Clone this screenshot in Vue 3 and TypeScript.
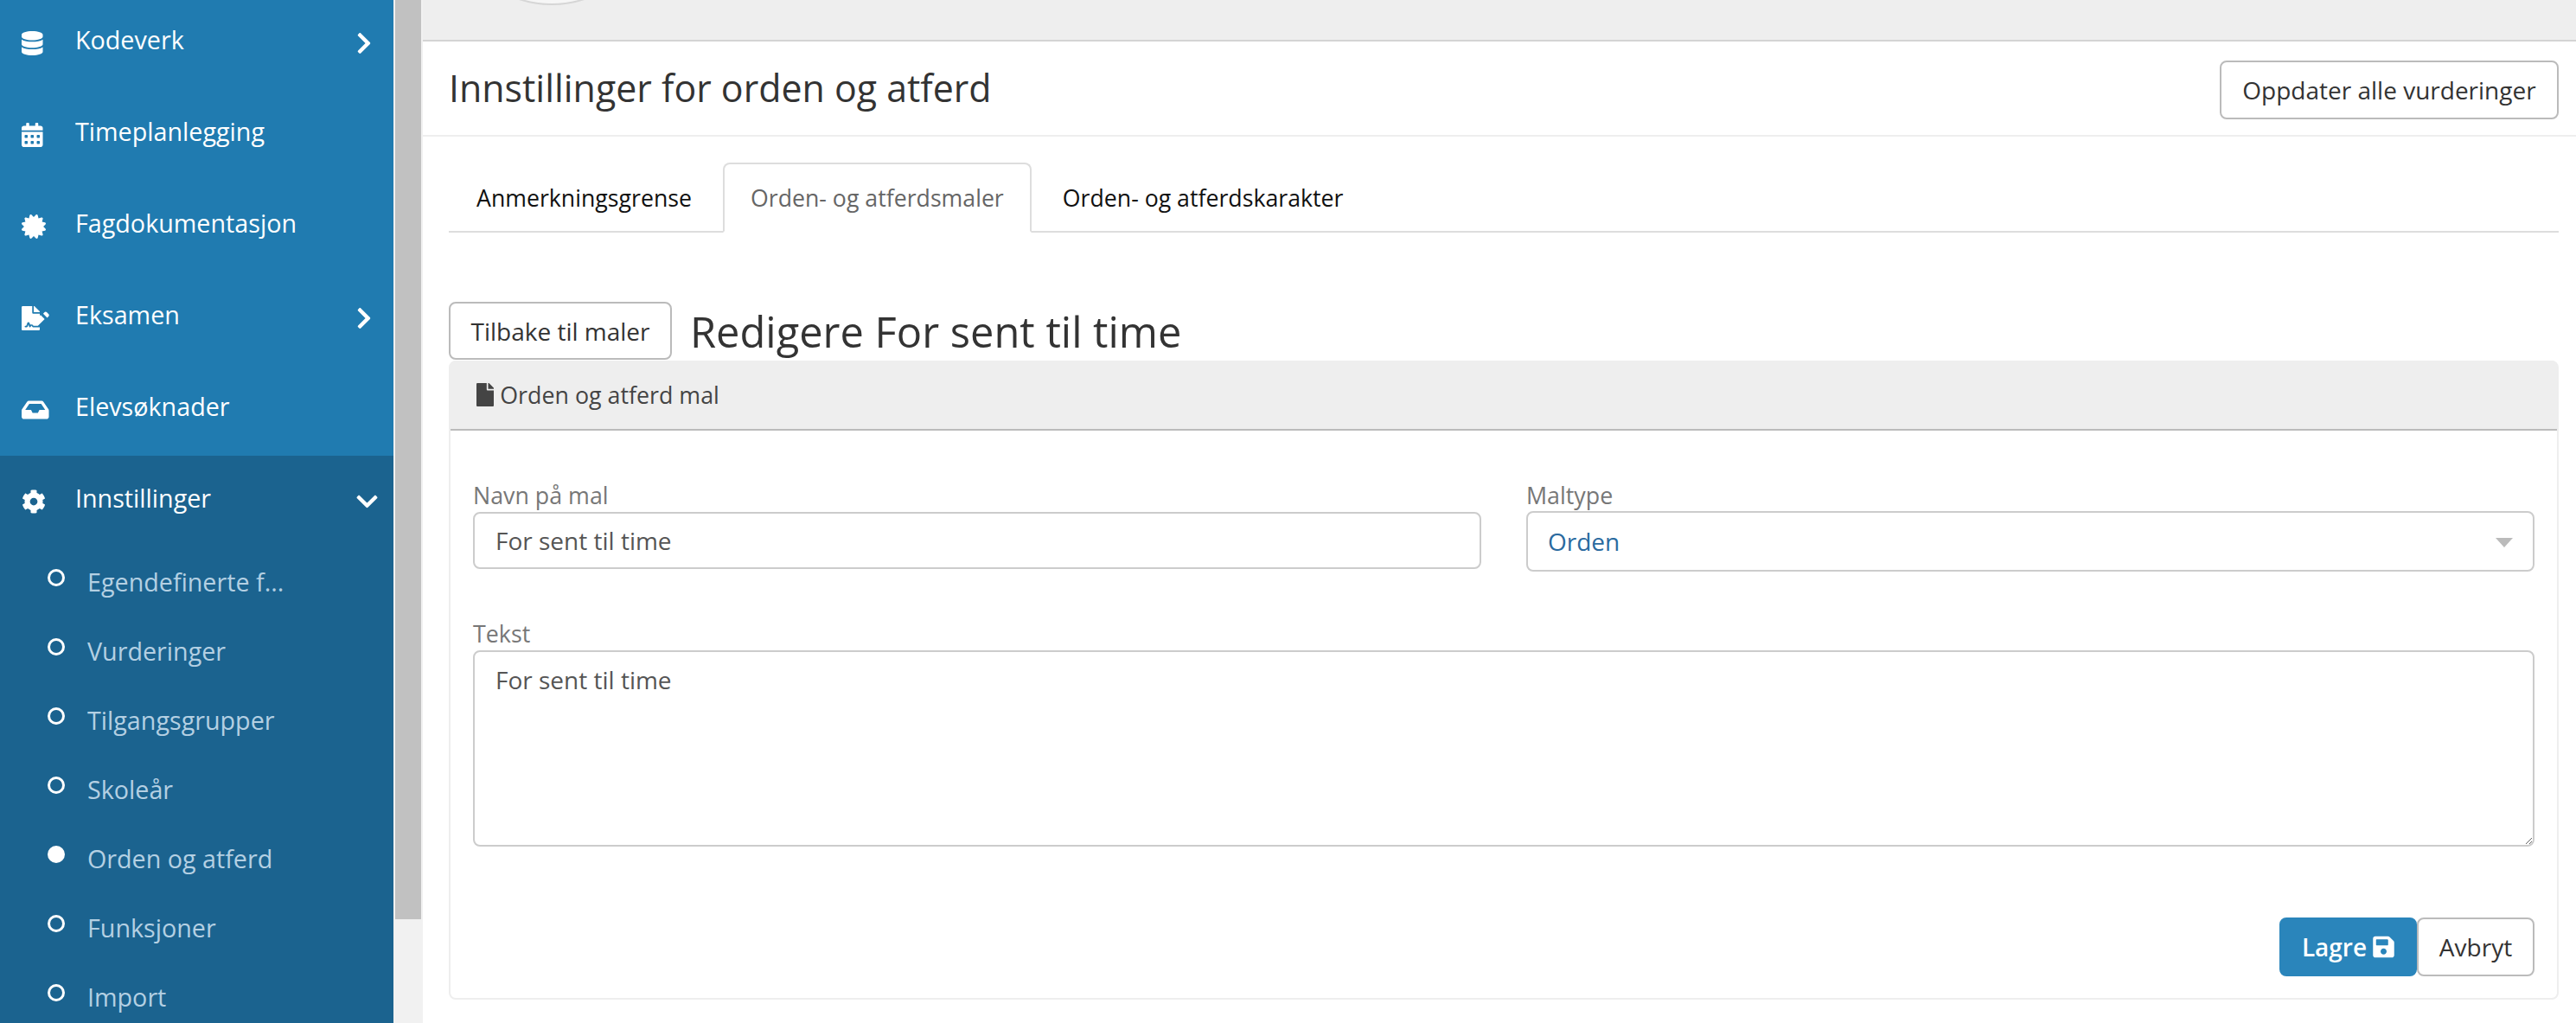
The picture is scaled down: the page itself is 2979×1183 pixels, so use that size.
<script setup lang="ts">
interface NavItem { label: string; vb: string; w: number; d: string; chevron?: boolean }

const chevronRight = 'M285.476 272.971L91.132 467.314c-9.373 9.373-24.569 9.373-33.941 0l-22.667-22.667c-9.357-9.357-9.375-24.522-.04-33.901L188.505 256 34.484 101.255c-9.335-9.379-9.317-24.544.04-33.901l22.667-22.667c9.373-9.373 24.569-9.373 33.941 0L285.475 239.03c9.373 9.372 9.373 24.568.001 33.941z'
const chevronDown = 'M207.029 381.476L12.686 187.132c-9.373-9.373-9.373-24.569 0-33.941l22.667-22.667c9.357-9.357 24.522-9.375 33.901-.04L224 284.505l154.745-154.021c9.379-9.335 24.544-9.317 33.901.04l22.667 22.667c9.373 9.373 9.373 24.569 0 33.941L240.971 381.476c-9.373 9.372-24.569 9.372-33.942 0z'
const cog = 'M487.4 315.7l-42.6-24.6c4.3-23.2 4.3-47 0-70.2l42.6-24.6c4.9-2.8 7.1-8.6 5.5-14-11.1-35.6-30-67.8-54.7-94.6-3.8-4.1-10-5.1-14.8-2.3L380.8 110c-17.9-15.4-38.5-27.3-60.8-35.1V25.8c0-5.6-3.9-10.5-9.4-11.7-36.7-8.2-74.3-7.8-109.2 0-5.5 1.2-9.4 6.1-9.4 11.7V75c-22.2 7.9-42.8 19.8-60.8 35.1L88.7 85.5c-4.9-2.8-11-1.9-14.8 2.3-24.7 26.7-43.6 58.9-54.7 94.6-1.7 5.4.6 11.2 5.5 14L67.3 221c-4.3 23.2-4.3 47 0 70.2l-42.6 24.6c-4.9 2.8-7.1 8.6-5.5 14 11.1 35.6 30 67.8 54.7 94.6 3.8 4.1 10 5.1 14.8 2.3l42.6-24.6c17.9 15.4 38.5 27.3 60.8 35.1v49.2c0 5.6 3.9 10.5 9.4 11.7 36.7 8.2 74.3 7.8 109.2 0 5.5-1.2 9.4-6.1 9.4-11.7v-49.2c22.2-7.9 42.8-19.8 60.8-35.1l42.6 24.6c4.9 2.8 11 1.9 14.8-2.3 24.7-26.7 43.6-58.9 54.7-94.6 1.5-5.5-.7-11.3-5.6-14.1zM256 336c-44.1 0-80-35.9-80-80s35.9-80 80-80 80 35.9 80 80-35.9 80-80 80z'
const fileIcon = 'M224 136V0H24C10.7 0 0 10.7 0 24v464c0 13.3 10.7 24 24 24h336c13.3 0 24-10.7 24-24V160H248c-13.2 0-24-10.8-24-24zm160-14.1v6.1H256V0h6.1c6.4 0 12.5 2.5 17 7l97.9 98c4.5 4.5 7 10.6 7 16.9z'
const saveIcon = 'M433.941 129.941l-83.882-83.882A48 48 0 0 0 316.118 32H48C21.49 32 0 53.49 0 80v352c0 26.51 21.49 48 48 48h352c26.51 0 48-21.49 48-48V163.882a48 48 0 0 0-14.059-33.941zM224 416c-35.346 0-64-28.654-64-64 0-35.346 28.654-64 64-64s64 28.654 64 64c0 35.346-28.654 64-64 64zm96-304.52V212c0 6.627-5.373 12-12 12H76c-6.627 0-12-5.373-12-12V108c0-6.627 5.373-12 12-12h228.52c3.183 0 6.235 1.264 8.485 3.515l3.48 3.48A11.996 11.996 0 0 1 320 111.48z'

const items: NavItem[] = [
  { label: 'Kodeverk', vb: '0 0 448 512', w: 24.5, chevron: true, d: 'M448 73.143v45.714C448 159.143 347.667 192 224 192S0 159.143 0 118.857V73.143C0 32.857 100.333 0 224 0s224 32.857 224 73.143zM448 176v102.857C448 319.143 347.667 352 224 352S0 319.143 0 278.857V176c48.125 33.143 136.208 48.572 224 48.572S399.874 209.143 448 176zm0 160v102.857C448 479.143 347.667 512 224 512S0 479.143 0 438.857V336c48.125 33.143 136.208 48.572 224 48.572S399.874 369.143 448 336z' },
  { label: 'Timeplanlegging', vb: '0 0 448 512', w: 24.5, d: 'M0 464c0 26.5 21.5 48 48 48h352c26.5 0 48-21.5 48-48V192H0v272zm320-196c0-6.6 5.4-12 12-12h40c6.6 0 12 5.4 12 12v40c0 6.6-5.4 12-12 12h-40c-6.6 0-12-5.4-12-12v-40zm0 128c0-6.6 5.4-12 12-12h40c6.6 0 12 5.4 12 12v40c0 6.6-5.4 12-12 12h-40c-6.6 0-12-5.4-12-12v-40zM192 268c0-6.6 5.4-12 12-12h40c6.6 0 12 5.4 12 12v40c0 6.6-5.4 12-12 12h-40c-6.6 0-12-5.4-12-12v-40zm0 128c0-6.6 5.4-12 12-12h40c6.6 0 12 5.4 12 12v40c0 6.6-5.4 12-12 12h-40c-6.6 0-12-5.4-12-12v-40zM64 268c0-6.6 5.4-12 12-12h40c6.6 0 12 5.4 12 12v40c0 6.6-5.4 12-12 12H76c-6.6 0-12-5.4-12-12v-40zm0 128c0-6.6 5.4-12 12-12h40c6.6 0 12 5.4 12 12v40c0 6.6-5.4 12-12 12H76c-6.6 0-12-5.4-12-12v-40zM400 64h-48V16c0-8.8-7.2-16-16-16h-32c-8.8 0-16 7.2-16 16v48H160V16c0-8.8-7.2-16-16-16h-32c-8.8 0-16 7.2-16 16v48H48C21.5 64 0 85.5 0 112v48h448v-48c0-26.5-21.5-48-48-48z' },
  { label: 'Fagdokumentasjon', vb: '0 0 512 512', w: 28, d: 'M458.622 255.92l45.985-45.005c13.708-12.977 7.316-36.039-10.664-40.339l-62.65-15.99 17.661-62.015c4.991-17.838-11.829-34.663-29.661-29.671l-61.994 17.667-15.984-62.671C337.085.197 313.765-6.276 300.99 7.228L256 53.57 211.011 7.229c-12.63-13.351-36.047-7.234-40.325 10.668l-15.984 62.671-61.995-17.667C74.87 57.907 58.056 74.738 63.046 92.572l17.661 62.015-62.65 15.99C.069 174.878-6.31 197.944 7.392 210.915l45.985 45.005-45.985 45.004c-13.708 12.977-7.316 36.039 10.664 40.339l62.65 15.99-17.661 62.015c-4.991 17.838 11.829 34.663 29.661 29.671l61.994-17.667 15.984 62.671c4.439 18.575 27.696 24.018 40.325 10.668L256 458.61l44.989 46.001c12.5 13.488 35.987 7.486 40.325-10.668l15.984-62.671 61.994 17.667c17.836 4.994 34.651-11.837 29.661-29.671l-17.661-62.015 62.65-15.99c17.987-4.302 24.366-27.367 10.664-40.339l-45.984-45.004z' },
  { label: 'Eksamen', vb: '0 0 576 512', w: 31.5, chevron: true, d: 'M218.17 424.14c-2.95-5.92-8.09-6.52-10.17-6.52s-7.22.59-10.02 6.19l-7.67 15.34c-6.37 12.78-25.03 11.37-29.48-2.09L144 386.59l-10.61 31.88c-5.89 17.66-22.38 29.53-41 29.53H80c-8.84 0-16-7.16-16-16s7.16-16 16-16h12.39c4.83 0 9.11-3.08 10.64-7.66l18.19-54.64c3.3-9.81 12.44-16.41 22.78-16.41s19.48 6.59 22.77 16.41l13.88 41.64c19.75-16.19 54.06-9.7 66 14.16 1.89 3.78 5.49 5.95 9.36 6.26v-82.12l128-127.09V160H248c-13.2 0-24-10.8-24-24V0H24C10.7 0 0 10.7 0 24v464c0 13.3 10.7 24 24 24h336c13.3 0 24-10.7 24-24v-40l-128-.11c-16.12-.31-30.58-9.28-37.83-23.75zM384 121.9c0-6.3-2.5-12.4-7-16.9L279.1 7c-4.5-4.5-10.6-7-17-7H256v128h128v-6.1zm-128 206.03V416h88.15l143.26-143.26-85.48-85.48L256 327.93zM570.58 169.67l-39.81-39.81c-12.45-12.45-32.63-12.45-45.08 0l-30.23 30.23 85.48 85.48 30.23-30.23c12.23-12.45 12.23-32.91-.59-45.67z' },
  { label: 'Elevsøknader', vb: '0 0 576 512', w: 31.5, d: 'M567.938 243.908L462.25 85.374A48.003 48.003 0 0 0 422.311 64H153.689a48 48 0 0 0-39.938 21.374L8.062 243.908A47.994 47.994 0 0 0 0 270.533V400c0 26.51 21.49 48 48 48h480c26.51 0 48-21.49 48-48V270.533a47.994 47.994 0 0 0-8.062-26.625zM162.252 128h251.497l85.333 128H376l-32 64H232l-32-64H76.918l85.334-128z' },
]

const subItems = ['Egendefinerte f...', 'Vurderinger', 'Tilgangsgrupper', 'Skoleår', 'Orden og atferd', 'Funksjoner', 'Import']
const tabs = ['Anmerkningsgrense', 'Orden- og atferdsmaler', 'Orden- og atferdskarakter']
</script>

<template>
  <div class="page">
    <aside class="sidebar">
      <nav class="nav">
        <a v-for="item in items" :key="item.label" class="nav-item">
          <span class="nav-icon"><svg :viewBox="item.vb" :width="item.w" height="28"><path :d="item.d" fill="currentColor" /></svg></span>
          <span class="nav-label">{{ item.label }}</span>
          <svg v-if="item.chevron" class="chev-r" viewBox="0 0 320 512" width="18" height="28"><path :d="chevronRight" fill="currentColor" /></svg>
        </a>
        <div class="group">
          <a class="nav-item">
            <span class="nav-icon"><svg viewBox="0 0 512 512" width="28" height="28"><path :d="cog" fill="currentColor" /></svg></span>
            <span class="nav-label">Innstillinger</span>
            <svg class="chev-d" viewBox="0 0 448 512" width="25" height="28"><path :d="chevronDown" fill="currentColor" /></svg>
          </a>
          <div class="subs">
            <a v-for="s in subItems" :key="s" class="sub-item">
              <span class="dot" :class="{ on: s === 'Orden og atferd' }"></span>
              <span class="sub-label">{{ s }}</span>
            </a>
          </div>
        </div>
      </nav>
    </aside>
    <div class="scrolltrack"><div class="scrollthumb"></div></div>
    <main class="main">
      <div class="topbar"><div class="avatar"></div></div>
      <header class="head">
        <h1 class="title">Innstillinger for orden og atferd</h1>
        <button class="btn update">Oppdater alle vurderinger</button>
      </header>
      <div class="content">
        <ul class="tabs">
          <li v-for="t in tabs" :key="t" class="tab" :class="{ active: t === 'Orden- og atferdsmaler' }">{{ t }}</li>
        </ul>
        <div class="edit-head">
          <button class="btn back">Tilbake til maler</button>
          <h2 class="edit-title">Redigere For sent til time</h2>
        </div>
        <section class="card">
          <div class="card-head">
            <svg viewBox="0 0 384 512" width="20.25" height="27"><path :d="fileIcon" fill="currentColor" /></svg>
            <span>Orden og atferd mal</span>
          </div>
          <div class="card-body">
            <div class="row">
              <div>
                <label class="lbl">Navn på mal</label>
                <input class="input" type="text" value="For sent til time" />
              </div>
              <div>
                <label class="lbl">Maltype</label>
                <div class="select"><span>Orden</span><i class="arrow"></i></div>
              </div>
            </div>
            <label class="lbl">Tekst</label>
            <textarea class="area">For sent til time</textarea>
            <div class="actions">
              <button class="btn save">Lagre <svg viewBox="0 0 448 512" width="25" height="28"><path :d="saveIcon" fill="currentColor" /></svg></button>
              <button class="btn cancel">Avbryt</button>
            </div>
          </div>
        </section>
      </div>
    </main>
  </div>
</template>

<style>
html, body { margin: 0; background: #fff; overflow: hidden; }
</style>

<style scoped>
.page { display: flex; width: 2979px; height: 1183px; overflow: hidden; font-family: "Open Sans", "Liberation Sans", sans-serif; font-size: 28px; color: #333; background: #fff; }
.sidebar { width: 455px; flex: none; height: 1183px; overflow: hidden; background: #207bb0; font-size: 28.7px; }
.nav { margin-top: -3px; color: #fff; }
.nav-item { display: flex; align-items: center; height: 106px; padding-left: 25px; }
.nav-icon { width: 62px; flex: none; display: flex; }
.nav-label { padding-bottom: 10px; }
.chev-r { margin-left: auto; margin-right: 25px; }
.chev-d { margin-left: auto; margin-right: 18px; }
.group { background: #1b638f; height: 800px; }
.subs { margin-top: -3px; }
.sub-item { display: flex; align-items: center; height: 80px; padding-left: 55px; color: #b4d0e3; }
.dot { width: 20px; height: 20px; box-sizing: border-box; border: 3px solid #fff; border-radius: 50%; margin-top: -4px; margin-right: 26px; flex: none; }
.dot.on { background: #fff; }
.sub-label { padding-top: 4px; }
.scrolltrack { width: 34px; flex: none; box-sizing: border-box; padding: 0 2px; background: #f1f1f1; }
.scrollthumb { height: 1063px; background: #c1c1c1; }
.main { flex: 1; min-width: 0; }
.topbar { height: 48px; box-sizing: border-box; background: #eee; border-bottom: 2px solid #d4d4d4; overflow: hidden; }
.avatar { width: 246px; height: 246px; box-sizing: border-box; margin: -240px 0 0 26px; border-radius: 50%; background: #f6f6f6; border: 2px solid #d6d6d6; }
.head { display: flex; align-items: center; justify-content: space-between; height: 110px; box-sizing: border-box; padding: 0 20px 0 30px; border-bottom: 2px solid #eee; }
.title { margin: 0; font-size: 42.9px; font-weight: 400; line-height: 1.2; color: #333; }
.btn { font-family: inherit; font-size: 28px; line-height: 38px; background: #fff; border: 2px solid #bbb; border-radius: 8px; color: #333; box-sizing: border-box; padding: 0; margin: 0; }
.update { width: 392px; height: 68px; margin-top: 4px; }
.content { padding: 30px 20px 0 30px; }
.tabs { display: flex; list-style: none; margin: 0; padding: 0; height: 81px; box-sizing: border-box; border-bottom: 2px solid #ddd; }
.tab { height: 81px; box-sizing: border-box; padding: 0 30px; line-height: 77px; border: 2px solid transparent; margin-right: 4px; color: #111; white-space: nowrap; font-size: 26.7px; }
.tab.active { border-color: #ddd; border-bottom-color: #fff; border-radius: 8px 8px 0 0; color: #666; }
.edit-head { display: flex; align-items: center; gap: 21px; margin-top: 80px; height: 68px; }
.back { width: 258px; height: 67px; flex: none; align-self: flex-start; }
.edit-title { margin: 0; font-size: 48.8px; font-weight: 400; line-height: 1.2; color: #333; }
.card { border: 2px solid #eee; border-radius: 8px; }
.card-head { height: 81px; box-sizing: border-box; background: #eee; border-bottom: 2px solid #bbb; display: flex; align-items: center; gap: 7px; padding: 0 0 0 30px; margin-top: -2px; color: #444; font-size: 26.8px; border-radius: 6px 6px 0 0; }
.card-body { padding: 56px 26px 25px; }
.row { display: grid; grid-template-columns: 1166px 1166px; column-gap: 52px; height: 160px; }
.lbl { display: block; height: 38px; line-height: 38px; font-size: 26.8px; color: #777; }
.input { display: block; width: 100%; height: 66px; box-sizing: border-box; border: 2px solid #ccc; border-radius: 8px; padding: 0 24px; font: inherit; font-size: 28px; color: #555; outline: none; background: #fff; }
.select { height: 70px; margin-top: -1px; box-sizing: border-box; border: 2px solid #ccc; border-radius: 8px; display: flex; align-items: center; justify-content: space-between; padding: 0 23px; color: #2a6a9f; }
.arrow { width: 0; height: 0; border-left: 10px solid transparent; border-right: 10px solid transparent; border-top: 11px solid #bbb; margin-top: 2px; }
.area { display: block; width: 100%; height: 227px; box-sizing: border-box; border: 2px solid #ccc; border-radius: 8px; padding: 12px 24px; font: inherit; font-size: 28px; line-height: 40px; color: #555; outline: none; resize: vertical; background: #fff; }
.actions { display: flex; justify-content: flex-end; margin-top: 82px; }
.save { width: 159px; height: 68px; background: #2a85bb; border-color: #2a85bb; color: #fff; font-weight: 600; display: flex; align-items: center; justify-content: center; gap: 7px; }
.cancel { width: 136px; height: 68px; }
</style>
